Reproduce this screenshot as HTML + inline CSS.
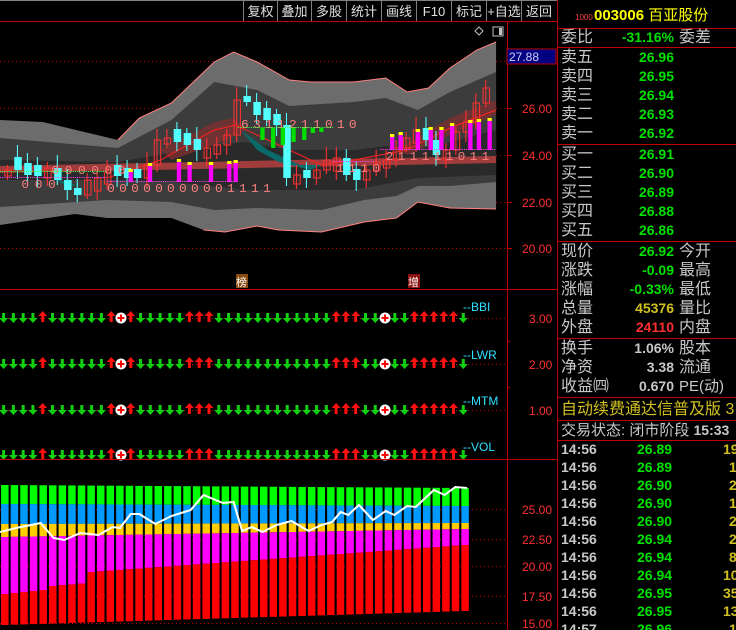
<!DOCTYPE html>
<html><head><meta charset="utf-8">
<style>
*{margin:0;padding:0}
body{width:736px;height:630px;background:#000;overflow:hidden;position:relative;font-family:"Liberation Sans","Noto Sans CJK SC",sans-serif}
#chart{position:absolute;left:0;top:0}
.p{position:absolute;left:557px;top:0;width:179px;height:630px;border-left:1px solid #c00000;box-sizing:border-box;overflow:hidden}
.r{position:absolute;left:3px;font-size:16px;color:#c8c8c8;white-space:nowrap;line-height:19px}
.n{position:absolute;font-size:14px;font-weight:bold;color:#00e000;text-align:right;white-space:nowrap;line-height:19px}
.hl{position:absolute;left:0;width:179px;height:1px;background:#c00000}
.tb{position:absolute;top:0;height:21px;color:#e0e0e0;font-size:13px;line-height:23px;text-align:center}
</style></head><body>
<svg id="chart" width="557" height="630" xmlns="http://www.w3.org/2000/svg">
<rect width="557" height="630" fill="#000"/>
<line x1="0" y1="0.5" x2="557" y2="0.5" stroke="#808080"/>
<line x1="0" y1="21.5" x2="557" y2="21.5" stroke="#c00000"/>
<g stroke="#808080">
<line x1="243.5" y1="1" x2="243.5" y2="21"/><line x1="277.5" y1="1" x2="277.5" y2="21"/><line x1="311.5" y1="1" x2="311.5" y2="21"/><line x1="346.5" y1="1" x2="346.5" y2="21"/><line x1="381.5" y1="1" x2="381.5" y2="21"/><line x1="416.5" y1="1" x2="416.5" y2="21"/><line x1="451.5" y1="1" x2="451.5" y2="21"/><line x1="486.5" y1="1" x2="486.5" y2="21"/><line x1="521.5" y1="1" x2="521.5" y2="21"/>
</g>
<g stroke="#c00000" stroke-dasharray="1,3">
<line x1="0" y1="61.5" x2="507" y2="61.5"/><line x1="0" y1="108.5" x2="507" y2="108.5"/><line x1="0" y1="155.5" x2="507" y2="155.5"/><line x1="0" y1="202.5" x2="507" y2="202.5"/><line x1="0" y1="248.5" x2="507" y2="248.5"/>
<line x1="0" y1="318.5" x2="507" y2="318.5"/><line x1="0" y1="364.5" x2="507" y2="364.5"/><line x1="0" y1="410.5" x2="507" y2="410.5"/>
<line x1="0" y1="509.5" x2="507" y2="509.5"/><line x1="0" y1="539.5" x2="507" y2="539.5"/><line x1="0" y1="566.5" x2="507" y2="566.5"/><line x1="0" y1="596.5" x2="507" y2="596.5"/><line x1="0" y1="623.5" x2="507" y2="623.5"/>
</g>
<g transform="scale(1.0714,1)">
<polygon fill="#6c6c6c" points="0,120 40,122 110,140 130,118 160,103 200,62 218,52 240,62 270,80 290,82 330,82 360,78 380,92 400,88 420,68 445,50 463,42 463,209 420,208 390,202 370,218 340,222 300,232 260,230 240,226 210,232 190,230 160,218 100,218 70,214 0,225"/>
<polygon fill="#3c3c3c" points="0,138 110,148 160,120 200,82 240,90 270,106 330,102 360,98 390,110 420,92 463,72 463,182 420,186 390,186 370,196 340,200 300,210 240,208 200,210 160,202 100,200 0,207"/>
<polygon fill="#2a2a2a" points="0,160 110,162 200,145 230,142 270,150 330,150 360,146 390,150 420,142 463,130 463,175 390,178 330,190 230,190 160,182 110,180 0,180"/>
<polyline fill="none" stroke="#ff8080" points="110,140 130,118 160,103 200,62 218,52 240,62 270,80 290,82 330,82 360,78 380,92 400,88 420,68 445,50 463,42"/>
<polyline fill="none" stroke="#ff8080" points="190,230 210,232 240,226 260,230 300,232 340,222 370,218 390,202 420,208 463,209"/>
<polygon fill="#a03c3c" points="0,166 463,156 463,163 0,173"/>
<polygon fill="#7a3030" opacity="0.8" points="150,150 200,122 218,118 230,130 200,145 160,160"/>
<polygon fill="#0a6a6a" points="225,130 250,150 280,165 300,165 290,170 260,162 240,150"/>
<polygon fill="#0a6a6a" points="50,178 70,185 75,186 60,185"/>
<polygon fill="#7a3030" opacity="0.8" points="370,150 420,118 463,100 463,115 420,135 380,155"/>
<polyline fill="none" stroke="#ff2020" points="100,178 150,160 200,130 220,125 250,140 300,165 330,160 380,150 420,128 463,110"/>
<g id="dyn"></g>
<g font-family="Liberation Mono,monospace" font-size="12" fill="#ff8080">
<text x="48" y="174" letter-spacing="-1">0 0 0 0 0 0</text>
<text x="20" y="188" letter-spacing="-1">0 0 0</text>
<text x="100" y="192" letter-spacing="-1.6">0 0 0 0 0 0 0 0 0 0 1 1 1 1</text>
<text x="225" y="128" letter-spacing="-1.6">6 3 1 1 2 1 1 0 1 0</text>
<text x="314" y="172" letter-spacing="-1.6">1 1 1 0</text>
<text x="360" y="160" letter-spacing="-1.6">2 1 1 1 1 1 0 1 1</text>
</g>
<g stroke-dasharray="1,1">
<line x1="0" y1="177.5" x2="100" y2="177.5" stroke="#ff40ff"/>
<line x1="100" y1="181.5" x2="222" y2="181.5" stroke="#ff40ff"/>
<line x1="222" y1="127.5" x2="312" y2="127.5" stroke="#40ff40"/>
<line x1="310" y1="161.5" x2="350" y2="161.5" stroke="#ff40ff"/>
<line x1="355" y1="149.5" x2="463" y2="149.5" stroke="#ff40ff"/>
<line x1="0" y1="171.5" x2="100" y2="171.5" stroke="#40ff40"/>
</g>
<g id="bars"></g>
</g>
<g id="arr"></g>
<line x1="507.5" y1="22" x2="507.5" y2="630" stroke="#c00000"/>
<line x1="0" y1="289.5" x2="557" y2="289.5" stroke="#c00000"/>
<line x1="0" y1="459.5" x2="557" y2="459.5" stroke="#c00000"/>
<g stroke="#c00000"><line x1="507" y1="61.5" x2="512" y2="61.5"/><line x1="507" y1="108.5" x2="512" y2="108.5"/><line x1="507" y1="155.5" x2="512" y2="155.5"/><line x1="507" y1="202.5" x2="512" y2="202.5"/><line x1="507" y1="248.5" x2="512" y2="248.5"/><line x1="507" y1="341.5" x2="510" y2="341.5"/><line x1="507" y1="387.5" x2="510" y2="387.5"/></g>
<rect x="507" y="49" width="49" height="15" fill="#000080" stroke="#c00000"/>
<text x="509" y="61" font-size="12" fill="#d0d0ff">27.88</text>
<g font-size="12" fill="#ff3030">
<text x="522" y="113">26.00</text><text x="522" y="160">24.00</text><text x="522" y="207">22.00</text><text x="522" y="253">20.00</text>
<text x="529" y="323">3.00</text><text x="529" y="369">2.00</text><text x="529" y="415">1.00</text>
<text x="522" y="514">25.00</text><text x="522" y="544">22.50</text><text x="522" y="571">20.00</text><text x="522" y="601">17.50</text><text x="522" y="628">15.00</text>
</g>
<g font-size="12" fill="#30e0ff">
<text x="463" y="311">--BBI</text><text x="463" y="359">--LWR</text><text x="463" y="405">--MTM</text><text x="463" y="451">--VOL</text>
</g>
<path d="M479 27l4 4-4 4-4-4z" fill="none" stroke="#c0c0c0"/>
<rect x="493" y="27" width="10" height="9" fill="none" stroke="#c0c0c0"/><rect x="499" y="28" width="3" height="7" fill="#c0c0c0"/>
<rect x="236" y="274" width="12" height="14" fill="#8b4a10"/><text x="236" y="286" font-size="11" fill="#fff">榜</text>
<rect x="408" y="274" width="12" height="14" fill="#8b1010"/><text x="408" y="286" font-size="11" fill="#fff">增</text>
</svg>
<div class="tb" style="left:244px;width:33px">复权</div>
<div class="tb" style="left:278px;width:33px">叠加</div>
<div class="tb" style="left:312px;width:34px">多股</div>
<div class="tb" style="left:347px;width:34px">统计</div>
<div class="tb" style="left:382px;width:34px">画线</div>
<div class="tb" style="left:417px;width:34px">F10</div>
<div class="tb" style="left:452px;width:34px">标记</div>
<div class="tb" style="left:487px;width:34px">+自选</div>
<div class="tb" style="left:522px;width:34px">返回</div>

<div class="p">
<div style="position:absolute;left:17px;top:13px;font-size:8px;color:#ff4040">1000</div>
<div style="position:absolute;left:36px;top:4px;font-size:15px;color:#ffff00;white-space:nowrap"><b>003006</b> 百亚股份</div>
<div class="hl" style="top:28px"></div>
<div class="r" style="top:28px">委比</div><div class="n" style="top:28px;right:62px">-31.16%</div><div class="r" style="top:28px;left:121px">委差</div>
<div class="hl" style="top:47px"></div>
<div class="r" style="top:48px">卖五</div><div class="n" style="top:48px;right:62px">26.96</div>
<div class="r" style="top:67px">卖四</div><div class="n" style="top:67px;right:62px">26.95</div>
<div class="r" style="top:86px">卖三</div><div class="n" style="top:86px;right:62px">26.94</div>
<div class="r" style="top:105px">卖二</div><div class="n" style="top:105px;right:62px">26.93</div>
<div class="r" style="top:124px">卖一</div><div class="n" style="top:124px;right:62px">26.92</div>
<div class="hl" style="top:144px"></div>
<div class="r" style="top:145px">买一</div><div class="n" style="top:145px;right:62px">26.91</div>
<div class="r" style="top:164px">买二</div><div class="n" style="top:164px;right:62px">26.90</div>
<div class="r" style="top:183px">买三</div><div class="n" style="top:183px;right:62px">26.89</div>
<div class="r" style="top:202px">买四</div><div class="n" style="top:202px;right:62px">26.88</div>
<div class="r" style="top:221px">买五</div><div class="n" style="top:221px;right:62px">26.86</div>
<div class="hl" style="top:241px"></div>
<div class="r" style="top:242px">现价</div><div class="n" style="top:242px;right:62px">26.92</div><div class="r" style="top:242px;left:121px">今开</div>
<div class="r" style="top:261px">涨跌</div><div class="n" style="top:261px;right:62px">-0.09</div><div class="r" style="top:261px;left:121px">最高</div>
<div class="r" style="top:280px">涨幅</div><div class="n" style="top:280px;right:62px">-0.33%</div><div class="r" style="top:280px;left:121px">最低</div>
<div class="r" style="top:299px">总量</div><div class="n" style="top:299px;right:62px;color:#d0c020">45376</div><div class="r" style="top:299px;left:121px">量比</div>
<div class="r" style="top:318px">外盘</div><div class="n" style="top:318px;right:62px;color:#ff3030">24110</div><div class="r" style="top:318px;left:121px">内盘</div>
<div class="hl" style="top:338px"></div>
<div class="r" style="top:339px">换手</div><div class="n" style="top:339px;right:62px;color:#c8c8c8">1.06%</div><div class="r" style="top:339px;left:121px">股本</div>
<div class="r" style="top:358px">净资</div><div class="n" style="top:358px;right:62px;color:#c8c8c8">3.38</div><div class="r" style="top:358px;left:121px">流通</div>
<div class="r" style="top:377px">收益㈣</div><div class="n" style="top:377px;right:62px;color:#c8c8c8">0.670</div><div class="r" style="top:377px;left:121px;font-size:15px">PE(动)</div>
<div class="hl" style="top:397px"></div>
<div class="r" style="top:400px;color:#d0c020">自动续费通达信普及版 3</div>
<div class="hl" style="top:420px"></div>
<div class="r" style="top:421px;font-size:15px">交易状态: 闭市阶段 <b style="font-size:14px">15:33</b></div>
<div class="hl" style="top:440px"></div>
<div id="ticks"></div>
</div>
<script>
var h='';
var cy=[170,170,175,176,168,180,190,195,180,178,172,176,178,178,165,140,138,142,145,150,148,145,135,100,102,115,120,125,178,175,178,170,160,158,175,180,170,162,160,148,138,130,140,155,150,132,122,103,88];
for(var i=0;i<49;i++){var x=4+i*9.3,c=cy[i],p=i?cy[i-1]:c+6;var up=c<p;var d=Math.max(Math.abs(c-p),6+(i*7%8));var t=up?c:c-d,b=up?c+d:c;var hi=t-5-(i*7%9),lo=b+4+(i*5%8);
var col=up?'#ff3030':'#54ffff';h+='<line x1="'+(x+3)+'" y1="'+hi+'" x2="'+(x+3)+'" y2="'+lo+'" stroke="'+col+'"/>';
h+=up?'<rect x="'+(x+.5)+'" y="'+t+'" width="6" height="'+(b-t)+'" fill="none" stroke="'+col+'"/>':'<rect x="'+x+'" y="'+t+'" width="7" height="'+(b-t)+'" fill="'+col+'"/>';}
var mb=[[120,172,182],[138,166,182],[165,162,182],[175,165,182],[195,165,182],[212,164,182],[218,163,182],[364,137,150],[372,135,150],[388,132,150],[400,130,150],[410,130,150],[420,126,150],[437,123,150],[445,122,150],[455,121,150]];
mb.forEach(function(m){h+='<rect x="'+m[0]+'" y="'+m[1]+'" width="4" height="'+(m[2]-m[1])+'" fill="#ff00ff"/><rect x="'+m[0]+'" y="'+(m[1]-3)+'" width="4" height="3" fill="#ffff00"/>';});
var gb=[[243,128,140],[253,128,148],[262,128,145],[272,128,142],[282,128,140],[290,128,133],[298,128,132]];
gb.forEach(function(m){h+='<rect x="'+m[0]+'" y="'+m[1]+'" width="4" height="'+(m[2]-m[1])+'" fill="#00e000"/>';});
document.getElementById('dyn').innerHTML=h;
var a='';
var pat="ddddudddddducuddddduuudddddddddddduuuddcdduuuuud";
[318,364,410,455].forEach(function(y){for(var i=0;i<48;i++){var x=3.6+i*9.78,ch=pat[i];
if(ch=='c'){a+='<circle cx="'+x+'" cy="'+y+'" r="5.5" fill="#fff"/><path d="M'+(x-3.5)+' '+y+'h7M'+x+' '+(y-3.5)+'v7" stroke="#f00" stroke-width="2"/>';}
else if(ch=='u'){a+='<path d="M'+x+' '+(y-7)+'l4.5 5h-3v6h-3v-6h-3z" fill="#ff1010"/>';}
else{a+='<path d="M'+x+' '+(y+5)+'l4.5 -5h-3v-5h-3v5h-3z" fill="#10d010"/>';}}});
document.getElementById('arr').innerHTML=a;
var v='';
for(var i=0;i<49;i++){var x=1+i*8.95,f=i/48;var bot=625-14*f,grn=485+3*f,blu=504+2*f,yel=524-1*f,mag=537-8*f;
var red=i<5?594-i:(i<9?590-i*0.8:572-27*(i-9)/39);
v+='<rect x="'+x+'" y="'+grn+'" width="7" height="'+(blu-grn)+'" fill="#00ff00"/><rect x="'+x+'" y="'+blu+'" width="7" height="'+(yel-blu)+'" fill="#0099ff"/><rect x="'+x+'" y="'+yel+'" width="7" height="'+(mag-yel)+'" fill="#ffcc00"/><rect x="'+x+'" y="'+mag+'" width="7" height="'+(red-mag)+'" fill="#ff00ff"/><rect x="'+x+'" y="'+red+'" width="7" height="'+(bot-red)+'" fill="#ff0000"/>';}
var wp=[[0,532],[15,528],[38,523],[50,538],[60,540],[75,533],[92,535],[105,527],[112,528],[122,514],[130,514],[145,524],[160,516],[178,510],[190,495],[208,503],[218,502],[226,531],[235,527],[245,532],[258,525],[272,521],[288,531],[300,525],[310,522],[318,512],[325,515],[335,505],[348,520],[360,511],[368,515],[380,506],[388,507],[405,490],[415,495],[425,487],[436,488]];
v+='<polyline fill="none" stroke="#fff" stroke-width="2" points="'+wp.map(function(p){return p.join(',')}).join(' ')+'"/>';
document.getElementById('bars').innerHTML=v;
var tk=[["26.89","19"],["26.89","1"],["26.90","2"],["26.90","1"],["26.90","2"],["26.94","2"],["26.94","8"],["26.94","10"],["26.95","35"],["26.95","13"],["26.96","1"]],s='';
tk.forEach(function(t,i){var y=440+i*18;s+='<div class="n" style="top:'+y+'px;left:3px;color:#c8c8c8;text-align:left">'+(i==10?'14:57':'14:56')+'</div><div class="n" style="top:'+y+'px;left:79px">'+t[0]+'</div><div class="n" style="top:'+y+'px;left:'+(t[1].length>1?165:171)+'px;color:#d0c020;text-align:left">'+t[1]+'</div>';});
document.getElementById('ticks').innerHTML=s;
</script>
</body></html>
